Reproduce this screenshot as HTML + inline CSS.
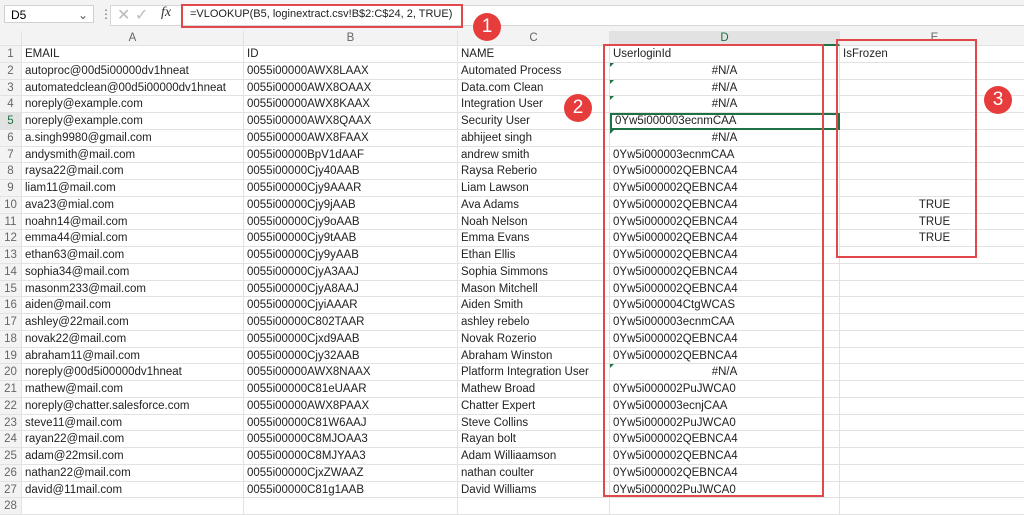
<!DOCTYPE html>
<html><head><meta charset="utf-8"><style>
body{margin:0;width:1024px;height:504px;overflow:hidden;background:#fff;font-family:"Liberation Sans",sans-serif;position:relative}
.tb{position:absolute;left:0;top:0;width:1024px;height:31px;background:#f3f3f3;border-bottom:1px solid #d4d4d4}
.nb{position:absolute;left:4px;top:5px;width:90px;height:18px;background:#fff;border:1px solid #d0d0d0;font-size:12px;line-height:18px;padding-left:6px;box-sizing:border-box}
.fx{position:absolute;left:110px;top:5px;width:914px;height:19px;background:#fff;border:1px solid #d6d6d6}
.grid{position:absolute;left:0;top:31px;display:grid;grid-template-columns:22px 222px 214px 152px 230px 190px 10px;grid-template-rows:15px;grid-auto-rows:16.76px;font-size:11.5px;color:#222}
.grid div{border-right:1px solid #e2e2e2;border-bottom:1px solid #e2e2e2;white-space:nowrap;overflow:hidden;padding-left:3px;line-height:17px;box-sizing:border-box}
.h{background:#f3f3f3;color:#666;text-align:center;padding-left:0!important;line-height:14px!important}
.r{background:#f3f3f3;color:#666;text-align:center;padding-left:0!important}
.c{text-align:center;padding-left:0!important}
.hd{background:#e2e2e2!important;color:#1e7145!important;border-bottom:2px solid #1e7145!important}
.red{position:absolute;border:2px solid #e0484b;box-sizing:border-box}
.cir{position:absolute;width:28px;height:28px;border-radius:50%;background:#e63c3c;color:#fff;font-size:19px;text-align:center;line-height:28px}
.g{position:relative}
.g:before{content:"";position:absolute;left:0;top:0;border-top:4px solid #1e7145;border-right:4px solid transparent}
</style></head><body>
<div class="tb">
<div class="nb">D5<span style="position:absolute;right:5px;color:#555">⌄</span></div>
<span style="position:absolute;left:100px;top:7px;font-size:12px;color:#666">⋮</span>
<div class="fx"></div>
<span style="position:absolute;left:117px;top:5px;font-size:16px;color:#bbb">✕ ✓</span>
<span style="position:absolute;left:161px;top:5px;font-size:14px;font-style:italic;font-family:'Liberation Serif',serif;color:#333">fx</span>
<span style="position:absolute;left:190px;top:8px;font-size:11px;color:#222">=VLOOKUP(B5, loginextract.csv!B$2:C$24, 2, TRUE)</span>
</div>
<div class="grid">
<div class="h"></div><div class="h">A</div><div class="h">B</div><div class="h">C</div><div class="h hd">D</div><div class="h">E</div><div class="h"></div>
<div class="r">1</div><div>EMAIL</div><div>ID</div><div>NAME</div><div>UserloginId</div><div>IsFrozen</div><div></div>
<div class="r">2</div><div>autoproc@00d5i00000dv1hneat</div><div>0055i00000AWX8LAAX</div><div>Automated Process</div><div class="c g">#N/A</div><div></div><div></div>
<div class="r">3</div><div>automatedclean@00d5i00000dv1hneat</div><div>0055i00000AWX8OAAX</div><div>Data.com Clean</div><div class="c g">#N/A</div><div></div><div></div>
<div class="r">4</div><div>noreply@example.com</div><div>0055i00000AWX8KAAX</div><div>Integration User</div><div class="c g">#N/A</div><div></div><div></div>
<div class="r hd" style="border-bottom:1px solid #e2e2e2!important">5</div><div>noreply@example.com</div><div>0055i00000AWX8QAAX</div><div>Security User</div><div style="border:2px solid #1e7145;line-height:13px">0Yw5i000003ecnmCAA</div><div></div><div></div>
<div class="r">6</div><div>a.singh9980@gmail.com</div><div>0055i00000AWX8FAAX</div><div>abhijeet singh</div><div class="c g">#N/A</div><div></div><div></div>
<div class="r">7</div><div>andysmith@mail.com</div><div>0055i00000BpV1dAAF</div><div>andrew smith</div><div>0Yw5i000003ecnmCAA</div><div></div><div></div>
<div class="r">8</div><div>raysa22@mail.com</div><div>0055i00000Cjy40AAB</div><div>Raysa Reberio</div><div>0Yw5i000002QEBNCA4</div><div></div><div></div>
<div class="r">9</div><div>liam11@mail.com</div><div>0055i00000Cjy9AAAR</div><div>Liam Lawson</div><div>0Yw5i000002QEBNCA4</div><div></div><div></div>
<div class="r">10</div><div>ava23@mial.com</div><div>0055i00000Cjy9jAAB</div><div>Ava Adams</div><div>0Yw5i000002QEBNCA4</div><div class="c">TRUE</div><div></div>
<div class="r">11</div><div>noahn14@mail.com</div><div>0055i00000Cjy9oAAB</div><div>Noah Nelson</div><div>0Yw5i000002QEBNCA4</div><div class="c">TRUE</div><div></div>
<div class="r">12</div><div>emma44@mial.com</div><div>0055i00000Cjy9tAAB</div><div>Emma Evans</div><div>0Yw5i000002QEBNCA4</div><div class="c">TRUE</div><div></div>
<div class="r">13</div><div>ethan63@mail.com</div><div>0055i00000Cjy9yAAB</div><div>Ethan Ellis</div><div>0Yw5i000002QEBNCA4</div><div></div><div></div>
<div class="r">14</div><div>sophia34@mail.com</div><div>0055i00000CjyA3AAJ</div><div>Sophia Simmons</div><div>0Yw5i000002QEBNCA4</div><div></div><div></div>
<div class="r">15</div><div>masonm233@mail.com</div><div>0055i00000CjyA8AAJ</div><div>Mason Mitchell</div><div>0Yw5i000002QEBNCA4</div><div></div><div></div>
<div class="r">16</div><div>aiden@mail.com</div><div>0055i00000CjyiAAAR</div><div>Aiden Smith</div><div>0Yw5i000004CtgWCAS</div><div></div><div></div>
<div class="r">17</div><div>ashley@22mail.com</div><div>0055i00000C802TAAR</div><div>ashley rebelo</div><div>0Yw5i000003ecnmCAA</div><div></div><div></div>
<div class="r">18</div><div>novak22@mail.com</div><div>0055i00000Cjxd9AAB</div><div>Novak Rozerio</div><div>0Yw5i000002QEBNCA4</div><div></div><div></div>
<div class="r">19</div><div>abraham11@mail.com</div><div>0055i00000Cjy32AAB</div><div>Abraham Winston</div><div>0Yw5i000002QEBNCA4</div><div></div><div></div>
<div class="r">20</div><div>noreply@00d5i00000dv1hneat</div><div>0055i00000AWX8NAAX</div><div>Platform Integration User</div><div class="c g">#N/A</div><div></div><div></div>
<div class="r">21</div><div>mathew@mail.com</div><div>0055i00000C81eUAAR</div><div>Mathew Broad</div><div>0Yw5i000002PuJWCA0</div><div></div><div></div>
<div class="r">22</div><div>noreply@chatter.salesforce.com</div><div>0055i00000AWX8PAAX</div><div>Chatter Expert</div><div>0Yw5i000003ecnjCAA</div><div></div><div></div>
<div class="r">23</div><div>steve11@mail.com</div><div>0055i00000C81W6AAJ</div><div>Steve Collins</div><div>0Yw5i000002PuJWCA0</div><div></div><div></div>
<div class="r">24</div><div>rayan22@mail.com</div><div>0055i00000C8MJOAA3</div><div>Rayan bolt</div><div>0Yw5i000002QEBNCA4</div><div></div><div></div>
<div class="r">25</div><div>adam@22msil.com</div><div>0055i00000C8MJYAA3</div><div>Adam Williaamson</div><div>0Yw5i000002QEBNCA4</div><div></div><div></div>
<div class="r">26</div><div>nathan22@mail.com</div><div>0055i00000CjxZWAAZ</div><div>nathan coulter</div><div>0Yw5i000002QEBNCA4</div><div></div><div></div>
<div class="r">27</div><div>david@11mail.com</div><div>0055i00000C81g1AAB</div><div>David Williams</div><div>0Yw5i000002PuJWCA0</div><div></div><div></div>
<div class="r">28</div><div></div><div></div><div></div><div></div><div></div><div></div>
</div>
<div class="red" style="left:181px;top:4px;width:282px;height:24px"></div>
<div class="red" style="left:603px;top:44px;width:221px;height:453px"></div>
<div class="red" style="left:836px;top:39px;width:141px;height:219px"></div>
<div class="cir" style="left:473px;top:13px">1</div>
<div class="cir" style="left:564px;top:94px">2</div>
<div class="cir" style="left:984px;top:86px">3</div>
</body></html>
